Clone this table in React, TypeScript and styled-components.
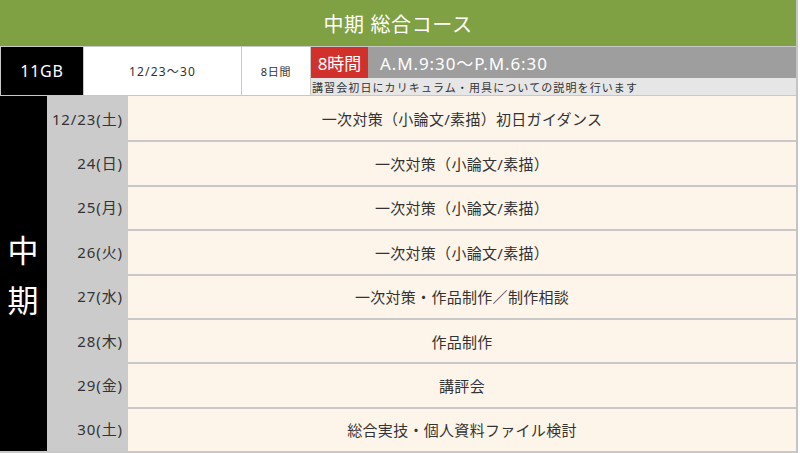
import * as React from 'react'
import styled, { createGlobalStyle } from 'styled-components'

const GlobalStyle = createGlobalStyle`
  body {
    margin: 0;
    background: #ffffff;
    font-family: 'Noto Sans', 'Noto Sans CJK JP', sans-serif;
  }
`

const Page = styled.div`
  width: 798px;
  border-right: 2px solid #c4c4c4;
  box-sizing: border-box;
`

const Header = styled.div`
  height: 46px;
  background: #7fa143;
  display: flex;
  align-items: center;
  justify-content: center;
  color: #ffffff;
  font-size: 20px;
  letter-spacing: 0.6px;
`

const InfoRow = styled.div`
  display: grid;
  grid-template-columns: 84px 158px 69px 1fr;
  height: 50px;
  border-top: 1px solid #c8c8c8;
  border-bottom: 1px solid #c8c8c8;
  box-sizing: border-box;
`

const InfoCell = styled.div<{ $dark?: boolean; $size: number; $spacing: number }>`
  display: flex;
  align-items: center;
  justify-content: center;
  background: ${p => (p.$dark ? '#000000' : '#ffffff')};
  color: ${p => (p.$dark ? '#ffffff' : '#333333')};
  font-size: ${p => p.$size}px;
  letter-spacing: ${p => p.$spacing}px;
  border-right: 1px solid #c8c8c8;
  border-left: ${p => (p.$dark ? '1px solid #c8c8c8' : 'none')};
`

const TimeBlock = styled.div`
  display: grid;
  grid-template-rows: 31px 1fr;
`

const TimeTop = styled.div`
  display: flex;
  background: #9d9e9d;
`

const HoursBadge = styled.div`
  width: 57px;
  background: #d2302a;
  color: #ffffff;
  font-size: 17px;
  display: flex;
  align-items: center;
  justify-content: center;
`

const Hours = styled.div`
  color: #ffffff;
  font-size: 17px;
  display: flex;
  align-items: center;
  padding-left: 12px;
  letter-spacing: 0.9px;
`

const Note = styled.div`
  background: #e6e6e6;
  color: #333333;
  font-family: 'Noto Sans CJK JP', sans-serif;
  font-size: 11px;
  letter-spacing: 1.1px;
  display: flex;
  align-items: center;
  padding-left: 1px;
`

const Schedule = styled.div`
  display: grid;
  grid-template-columns: 47px 1fr;
  height: 357px;
  border-bottom: 2px solid #c8c8c8;
  box-sizing: border-box;
`

const Term = styled.div`
  background: #000000;
  color: #ffffff;
  font-family: 'Noto Sans CJK JP', sans-serif;
  font-size: 31px;
  line-height: 50px;
  display: flex;
  flex-direction: column;
  align-items: center;
  justify-content: center;
  padding-right: 1px;
`

const Days = styled.div`
  display: grid;
  grid-template-rows: repeat(8, 1fr);
`

const Day = styled.div`
  display: grid;
  grid-template-columns: 81px 1fr;
`

const DateCell = styled.div`
  background: #cbcbcb;
  color: #333333;
  font-size: 15px;
  letter-spacing: 0.9px;
  display: flex;
  align-items: center;
  justify-content: flex-end;
  padding-right: 5px;
`

const Topic = styled.div`
  background: #fdf5ea;
  color: #333333;
  font-size: 15px;
  letter-spacing: 0.3px;
  display: flex;
  align-items: center;
  justify-content: center;
  ${Day} + ${Day} & {
    border-top: 2px solid #c8c8c8;
  }
`

const days = [
  ['12/23(土)', '一次対策（小論文/素描）初日ガイダンス'],
  ['24(日)', '一次対策（小論文/素描）'],
  ['25(月)', '一次対策（小論文/素描）'],
  ['26(火)', '一次対策（小論文/素描）'],
  ['27(水)', '一次対策・作品制作／制作相談'],
  ['28(木)', '作品制作'],
  ['29(金)', '講評会'],
  ['30(土)', '総合実技・個人資料ファイル検討'],
]

export default function App() {
  return (
    <Page>
      <GlobalStyle />
      <Header>中期 総合コース</Header>
      <InfoRow>
        <InfoCell $dark $size={16} $spacing={0.8}>11GB</InfoCell>
        <InfoCell $size={12} $spacing={1.2}>12/23～30</InfoCell>
        <InfoCell $size={11} $spacing={0.8}>8日間</InfoCell>
        <TimeBlock>
          <TimeTop>
            <HoursBadge>8時間</HoursBadge>
            <Hours>A.M.9:30～P.M.6:30</Hours>
          </TimeTop>
          <Note>講習会初日にカリキュラム・用具についての説明を行います</Note>
        </TimeBlock>
      </InfoRow>
      <Schedule>
        <Term>
          <span>中</span>
          <span>期</span>
        </Term>
        <Days>
          {days.map(([date, topic]) => (
            <Day key={date}>
              <DateCell>{date}</DateCell>
              <Topic>{topic}</Topic>
            </Day>
          ))}
        </Days>
      </Schedule>
    </Page>
  )
}
